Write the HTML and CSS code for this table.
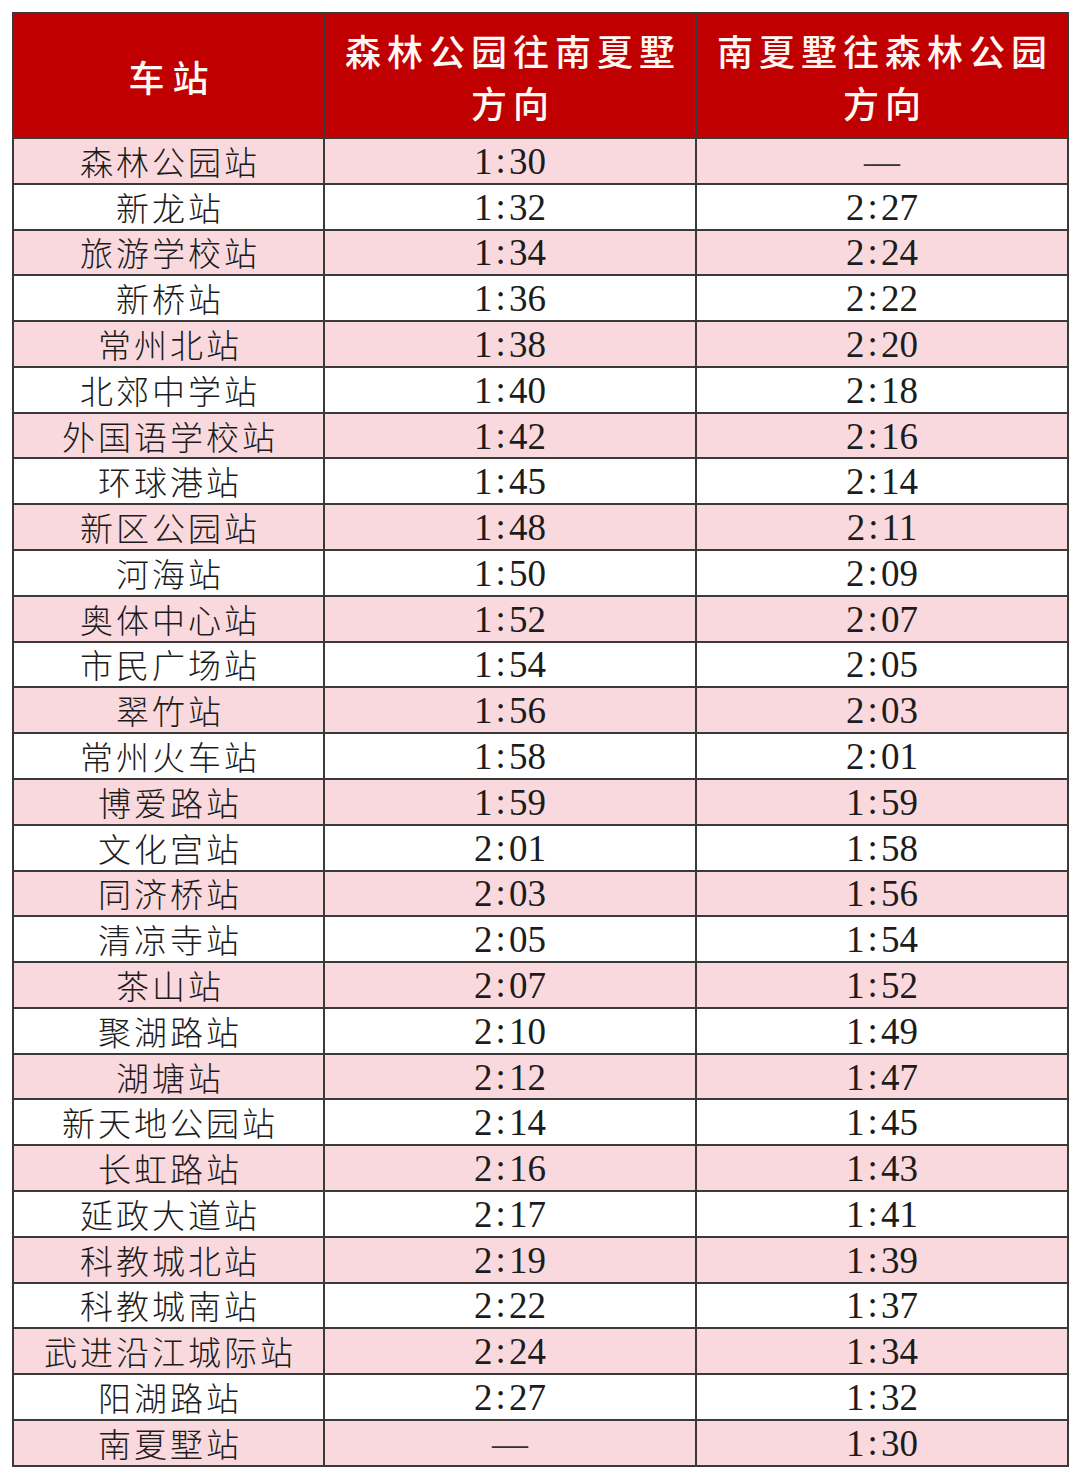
FILE: index.html
```html
<!DOCTYPE html>
<html lang="zh-CN">
<head>
<meta charset="utf-8">
<title>时刻表</title>
<link rel="stylesheet" href="styles.css">
</head>
<body>
<table class="timetable">
  <colgroup>
    <col class="c1"><col class="c2"><col class="c3">
  </colgroup>
  <thead>
    <tr>
      <th class="h-station">车站</th>
      <th>森林公园往南夏墅<br>方向</th>
      <th>南夏墅往森林公园<br>方向</th>
    </tr>
  </thead>
  <tbody>
    <tr class="pink"><td class="st">森林公园站</td><td class="tm">1<span class="c">:</span>30</td><td class="tm dash">—</td></tr>
    <tr><td class="st">新龙站</td><td class="tm">1<span class="c">:</span>32</td><td class="tm">2<span class="c">:</span>27</td></tr>
    <tr class="pink"><td class="st">旅游学校站</td><td class="tm">1<span class="c">:</span>34</td><td class="tm">2<span class="c">:</span>24</td></tr>
    <tr><td class="st">新桥站</td><td class="tm">1<span class="c">:</span>36</td><td class="tm">2<span class="c">:</span>22</td></tr>
    <tr class="pink"><td class="st">常州北站</td><td class="tm">1<span class="c">:</span>38</td><td class="tm">2<span class="c">:</span>20</td></tr>
    <tr><td class="st">北郊中学站</td><td class="tm">1<span class="c">:</span>40</td><td class="tm">2<span class="c">:</span>18</td></tr>
    <tr class="pink"><td class="st">外国语学校站</td><td class="tm">1<span class="c">:</span>42</td><td class="tm">2<span class="c">:</span>16</td></tr>
    <tr><td class="st">环球港站</td><td class="tm">1<span class="c">:</span>45</td><td class="tm">2<span class="c">:</span>14</td></tr>
    <tr class="pink"><td class="st">新区公园站</td><td class="tm">1<span class="c">:</span>48</td><td class="tm">2<span class="c">:</span>11</td></tr>
    <tr><td class="st">河海站</td><td class="tm">1<span class="c">:</span>50</td><td class="tm">2<span class="c">:</span>09</td></tr>
    <tr class="pink"><td class="st">奥体中心站</td><td class="tm">1<span class="c">:</span>52</td><td class="tm">2<span class="c">:</span>07</td></tr>
    <tr><td class="st">市民广场站</td><td class="tm">1<span class="c">:</span>54</td><td class="tm">2<span class="c">:</span>05</td></tr>
    <tr class="pink"><td class="st">翠竹站</td><td class="tm">1<span class="c">:</span>56</td><td class="tm">2<span class="c">:</span>03</td></tr>
    <tr><td class="st">常州火车站</td><td class="tm">1<span class="c">:</span>58</td><td class="tm">2<span class="c">:</span>01</td></tr>
    <tr class="pink"><td class="st">博爱路站</td><td class="tm">1<span class="c">:</span>59</td><td class="tm">1<span class="c">:</span>59</td></tr>
    <tr><td class="st">文化宫站</td><td class="tm">2<span class="c">:</span>01</td><td class="tm">1<span class="c">:</span>58</td></tr>
    <tr class="pink"><td class="st">同济桥站</td><td class="tm">2<span class="c">:</span>03</td><td class="tm">1<span class="c">:</span>56</td></tr>
    <tr><td class="st">清凉寺站</td><td class="tm">2<span class="c">:</span>05</td><td class="tm">1<span class="c">:</span>54</td></tr>
    <tr class="pink"><td class="st">茶山站</td><td class="tm">2<span class="c">:</span>07</td><td class="tm">1<span class="c">:</span>52</td></tr>
    <tr><td class="st">聚湖路站</td><td class="tm">2<span class="c">:</span>10</td><td class="tm">1<span class="c">:</span>49</td></tr>
    <tr class="pink"><td class="st">湖塘站</td><td class="tm">2<span class="c">:</span>12</td><td class="tm">1<span class="c">:</span>47</td></tr>
    <tr><td class="st">新天地公园站</td><td class="tm">2<span class="c">:</span>14</td><td class="tm">1<span class="c">:</span>45</td></tr>
    <tr class="pink"><td class="st">长虹路站</td><td class="tm">2<span class="c">:</span>16</td><td class="tm">1<span class="c">:</span>43</td></tr>
    <tr><td class="st">延政大道站</td><td class="tm">2<span class="c">:</span>17</td><td class="tm">1<span class="c">:</span>41</td></tr>
    <tr class="pink"><td class="st">科教城北站</td><td class="tm">2<span class="c">:</span>19</td><td class="tm">1<span class="c">:</span>39</td></tr>
    <tr><td class="st">科教城南站</td><td class="tm">2<span class="c">:</span>22</td><td class="tm">1<span class="c">:</span>37</td></tr>
    <tr class="pink"><td class="st">武进沿江城际站</td><td class="tm">2<span class="c">:</span>24</td><td class="tm">1<span class="c">:</span>34</td></tr>
    <tr><td class="st">阳湖路站</td><td class="tm">2<span class="c">:</span>27</td><td class="tm">1<span class="c">:</span>32</td></tr>
    <tr class="pink"><td class="st">南夏墅站</td><td class="tm dash">—</td><td class="tm">1<span class="c">:</span>30</td></tr>
  </tbody>
</table>
</body>
</html>
```

FILE: styles.css
```css
html, body {
  margin: 0;
  padding: 0;
  background: #ffffff;
}
body {
  padding: 12px 11px 10px 12px;
  font-family: "Noto Sans CJK SC", sans-serif;
}
.timetable {
  border-collapse: collapse;
  table-layout: fixed;
  width: 1055px;
  border: 2px solid #3a3a3a;
}
.c1 { width: 311px; }
.c2 { width: 372px; }
.c3 { width: 372px; }
.timetable th {
  background: #c00000;
  color: #fff8f4;
  font-family: "Noto Sans CJK SC", sans-serif;
  font-weight: 500;
  font-size: 36px;
  line-height: 52px;
  letter-spacing: 6px;
  height: 123px;
  padding: 0 0 0 6px;
  border: 2px solid #3a3a3a;
  text-align: center;
  vertical-align: middle;
}
.timetable .h-station {
  letter-spacing: 8px;
  padding-left: 8px;
}
.timetable td {
  height: 43.79px;
  padding: 0;
  border: 2px solid #3a3a3a;
  text-align: center;
  vertical-align: middle;
  color: #1c1c1c;
  line-height: 40px;
}
.timetable tr.pink td {
  background: #f9d9de;
}
.timetable td.st {
  font-family: "Noto Sans CJK SC", sans-serif;
  font-weight: 300;
  font-size: 33px;
  letter-spacing: 3px;
  padding-left: 3px;
}
.timetable td.tm {
  font-family: "Liberation Serif", "Times New Roman", serif;
  font-size: 37px;
  letter-spacing: 0;
  height: 41.79px;
  padding-top: 2px;
}
.tm .c {
  margin: 0 3px;
  position: relative;
  top: -1px;
}
.timetable td.dash {
  font-size: 36px;
  color: #333;
}
```
